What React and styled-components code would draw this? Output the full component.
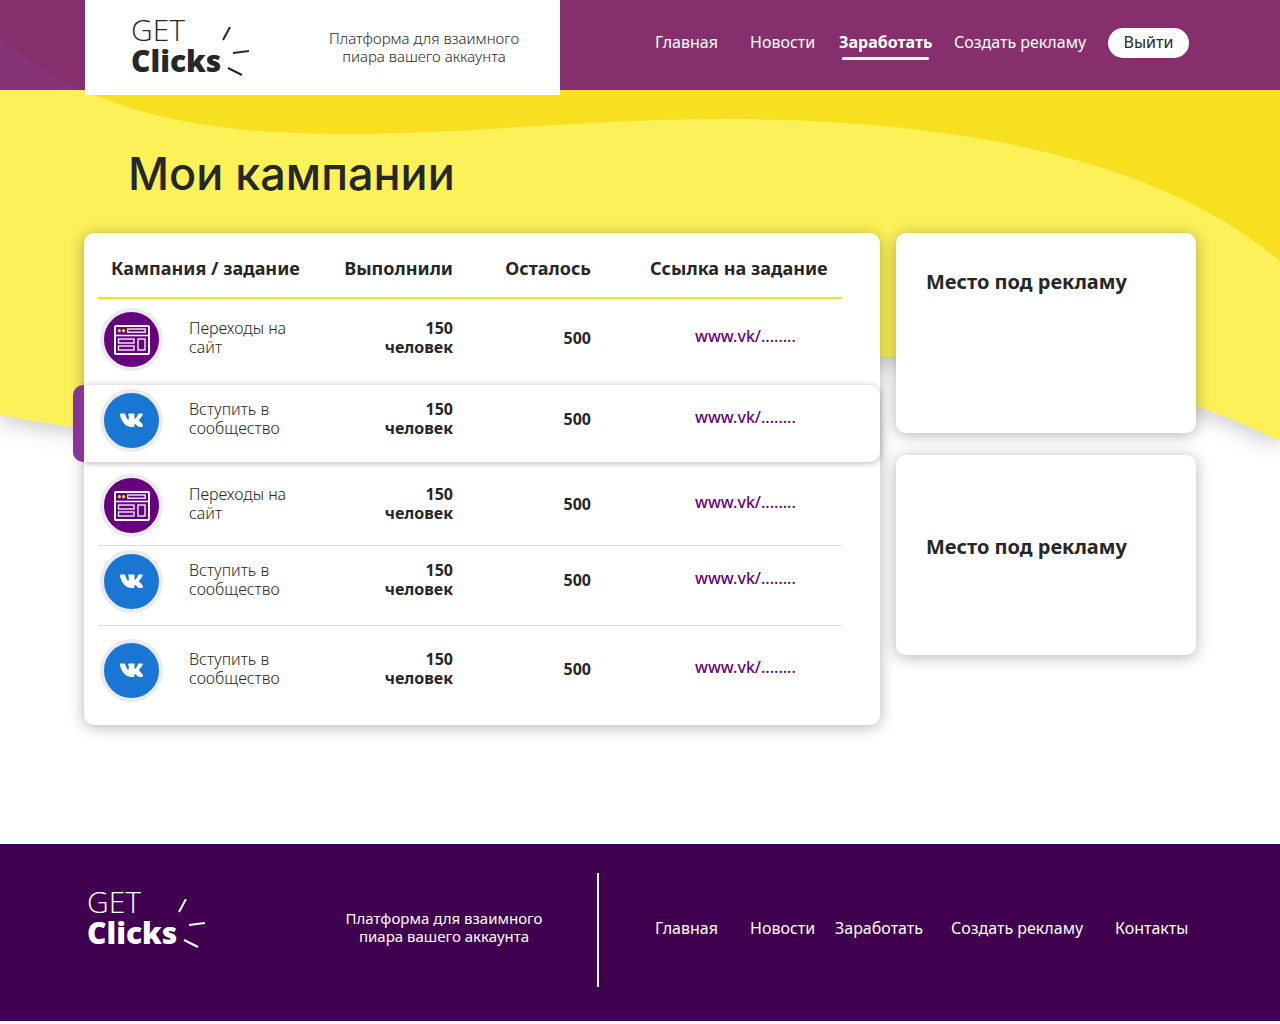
import styled, { createGlobalStyle } from "styled-components";

const campaigns = [
    { id: 1, type: "site", title: "Переходы на сайт", done: 150, left: 500, top: 9, bottom: 14 },
    { id: 2, type: "vk", title: "Вступить в сообщество", done: 150, left: 500, top: 4, bottom: 10, active: true },
    { id: 3, type: "site", title: "Переходы на сайт", done: 150, left: 500, top: 12, bottom: 8, line: true },
    { id: 4, type: "vk", title: "Вступить в сообщество", done: 150, left: 500, top: 4, bottom: 12, line: true },
    { id: 5, type: "vk", title: "Вступить в сообщество", done: 150, left: 500, top: 13, bottom: 23 },
];

function Logo() {
    return (
        <LogoBox>
            <LogoText>
                <LogoThin>GET</LogoThin>
                <LogoBold>Clicks</LogoBold>
            </LogoText>
            <svg width="28" height="50" viewBox="0 0 28 50" fill="none" stroke="currentColor" strokeWidth="2">
                <path d="M9 0 2 13M12 26l16-2M7 41l14 7" />
            </svg>
        </LogoBox>
    );
}

function SiteIcon() {
    return (
        <IconCircle $color="#67007f">
            <svg width="36" height="30" viewBox="0 0 36 30" fill="none" stroke="#fff">
                <rect x="1" y="1" width="34" height="28" rx="1" strokeWidth="2" />
                <path d="M1 10.5h34" strokeWidth="1.5" />
                <rect x="13.7" y="4" width="17.5" height="3.2" strokeWidth="1.3" />
                <rect x="4.5" y="14" width="15.5" height="4" strokeWidth="1.3" />
                <rect x="4.5" y="21" width="15.5" height="4" strokeWidth="1.3" />
                <rect x="24" y="14" width="7" height="11" strokeWidth="1.3" />
                <circle cx="5.3" cy="5.7" r="1.6" fill="#f7e020" stroke="none" />
                <circle cx="9.6" cy="5.7" r="1.6" fill="#f7e020" stroke="none" />
            </svg>
        </IconCircle>
    );
}

function VkIcon() {
    return (
        <IconCircle $color="#1976d2">
            <svg width="23" height="15" viewBox="0 0 23 15" fill="#fff">
                <path d="M.7.5h3.5c.6 0 .9.3 1.1.9C6.2 4.5 7.5 6.7 8.3 6.7c.4 0 .5-.5.5-1.4V3.2c0-1.1-.7-1.3-.7-1.8 0-.5.4-.9 1-.9h4.6c.6 0 .8.3.8.9v3.7c0 .6.2.8.4.8.5 0 2.3-2.3 3.2-4.6.2-.5.5-.8 1.1-.8h2.8c.8 0 1 .5.7 1.1-.6 1.7-3.1 4.6-3.5 5.2-.3.5-.2.8.2 1.2 1 1 2.8 2.6 3.5 4 .5.9.1 1.9-.9 1.9h-3c-.7 0-1.1-.3-1.6-.8-1.2-1.3-2-2.1-2.5-2.1-.4 0-.5.3-.5.9v1c0 .7-.3 1-1.2 1C7.9 14.1 4.2 12.6.9 5.2.3 3.7.1 2.500 0 1.300 0 .8.3.5.7.5z" />
            </svg>
        </IconCircle>
    );
}

function Waves() {
    return (
        <WavesSvg viewBox="0 0 1280 500" preserveAspectRatio="none" aria-hidden="true">
            <path
                className="light"
                d="M0 0H1280V441C1180 392 1040 352 880 357C650 364 480 440 280 440C170 440 90 432 0 415Z"
                fill="#fcf158"
            />
            <path
                d="M0 0H1280V261C1170 168 985 119 720 119C590 119 470 134 340 134C200 134 85 111 0 38Z"
                fill="#f7e020"
            />
        </WavesSvg>
    );
}

function CampaignRow({ item }) {
    return (
        <Row $top={item.top} $bottom={item.bottom} $active={item.active} $line={item.line}>
            <TaskCell>
                {item.type === "vk" ? <VkIcon /> : <SiteIcon />}
                <TaskName>{item.title}</TaskName>
            </TaskCell>
            <NumberCell>
                <Count>{item.done} человек</Count>
            </NumberCell>
            <NumberCell>{item.left}</NumberCell>
            <LinkCell>
                <TaskLink href="#task">www.vk/........</TaskLink>
            </LinkCell>
        </Row>
    );
}

function App() {
    return (
        <>
            <GlobalStyle />
            <Page>
                <Waves />
                <Header>
                    <HeaderInner>
                        <Brand>
                            <Logo />
                            <Tagline>Платформа для взаимного пиара вашего аккаунта</Tagline>
                        </Brand>
                        <HeaderNav>
                            <NavLink href="#main">Главная</NavLink>
                            <NavLink href="#news">Новости</NavLink>
                            <NavLink href="#earn" $current aria-current="page">Заработать</NavLink>
                            <NavLink href="#create">Создать рекламу</NavLink>
                            <ExitButton type="button">Выйти</ExitButton>
                        </HeaderNav>
                    </HeaderInner>
                </Header>
                <Main>
                    <Title>Мои кампании</Title>
                    <Columns>
                        <TableCard>
                            <Table>
                                <thead>
                                    <HeadRow>
                                        <HeadCell $indent={13}>Кампания / задание</HeadCell>
                                        <HeadCell $right>Выполнили</HeadCell>
                                        <HeadCell $right>Осталось</HeadCell>
                                        <HeadCell $indent={59}>Ссылка на задание</HeadCell>
                                    </HeadRow>
                                </thead>
                                <tbody>
                                    {campaigns.map((item) => (
                                        <CampaignRow key={item.id} item={item} />
                                    ))}
                                </tbody>
                            </Table>
                        </TableCard>
                        <Aside>
                            <AdCard $top={35}>Место под рекламу</AdCard>
                            <AdCard $top={78}>Место под рекламу</AdCard>
                        </Aside>
                    </Columns>
                </Main>
                <Footer>
                    <FooterInner>
                        <FooterBrand>
                            <Logo />
                            <Tagline $footer>Платформа для взаимного пиара вашего аккаунта</Tagline>
                        </FooterBrand>
                        <FooterNav>
                            <NavLink href="#main">Главная</NavLink>
                            <NavLink href="#news">Новости</NavLink>
                            <NavLink href="#earn">Заработать</NavLink>
                            <NavLink href="#create">Создать рекламу</NavLink>
                            <NavLink href="#contacts">Контакты</NavLink>
                        </FooterNav>
                    </FooterInner>
                </Footer>
            </Page>
        </>
    );
}

export default App;

// Styles

const GlobalStyle = createGlobalStyle`
    * {
        box-sizing: border-box;
    }

    body {
        margin: 0;
        background: #fff;
        color: #272727;
        font-family: "Noto Sans", "Open Sans", sans-serif;
        font-size: 16px;
    }
`;

const Page = styled.div`
    position: relative;
`;

const WavesSvg = styled.svg`
    position: absolute;
    top: 0;
    left: 0;
    z-index: -1;
    width: 100%;
    height: 500px;

    .light {
        filter: drop-shadow(0 6px 10px rgba(0, 0, 0, 0.2));
    }
`;

const Header = styled.header`
    height: 90px;
    background: rgba(104, 4, 127, 0.8);
`;

const HeaderInner = styled.div`
    display: flex;
    align-items: flex-start;
    justify-content: space-between;
    max-width: 1110px;
    margin: 0 auto;
`;

const Brand = styled.div`
    display: flex;
    justify-content: space-between;
    width: 475px;
    height: 95px;
    padding: 14px 36px 0 46px;
    background: #fff;
`;

const LogoBox = styled.div`
    display: flex;
`;

const LogoText = styled.div`
    display: flex;
    flex-direction: column;
    font-family: "Open Sans", sans-serif;
    font-size: 30px;
    line-height: 31px;

    & + svg {
        margin-top: 13px;
    }
`;

const LogoThin = styled.span`
    font-weight: 300;
`;

const LogoBold = styled.span`
    font-weight: 800;
`;

const Tagline = styled.p`
    width: 200px;
    margin: ${({ $footer }) => ($footer ? 23 : 15)}px 0 0;
    font-size: 15px;
    font-weight: ${({ $footer }) => ($footer ? 400 : 300)};
    line-height: 18px;
    text-align: center;
`;

const HeaderNav = styled.nav`
    display: grid;
    grid-template-columns: 95px 89px 115px 154px 81px;
    align-items: start;
    padding-top: 28px;
    margin-right: 6px;
`;

const NavLink = styled.a`
    position: relative;
    justify-self: start;
    color: #fff;
    font-weight: ${({ $current }) => ($current ? 700 : 400)};
    line-height: 29px;
    text-decoration: none;
    white-space: nowrap;

    &::after {
        content: "";
        display: ${({ $current }) => ($current ? "block" : "none")};
        position: absolute;
        right: 3px;
        bottom: -3px;
        left: 3px;
        height: 3px;
        border-radius: 2px;
        background: #fff;
    }
`;

const ExitButton = styled.button`
    height: 30px;
    padding: 0 0 2px;
    border: none;
    border-radius: 15px;
    background: #fff;
    color: #272727;
    font: inherit;
    cursor: pointer;
`;

const Main = styled.main`
    max-width: 1112px;
    margin: 0 auto;
    padding-bottom: 119px;
`;

const Title = styled.h1`
    margin: 0;
    padding: 54px 44px 29px;
    font-family: Inter, sans-serif;
    font-size: 45px;
    font-weight: 500;
    line-height: 60px;
`;

const Columns = styled.div`
    display: flex;
    align-items: flex-start;
    gap: 16px;
`;

const Card = styled.section`
    border-radius: 10px;
    background: #fff;
    box-shadow: 0 2px 15px rgba(0, 0, 0, 0.3);
`;

const TableCard = styled(Card)`
    flex: 1;
`;

const Table = styled.table`
    display: block;

    thead,
    tbody {
        display: block;
    }
`;

const Row = styled.tr`
    position: relative;
    display: grid;
    grid-template-columns: 225px 130px 138px 1fr;
    align-items: center;
    margin: ${({ $active }) => ($active ? "0" : "0 38px 0 14px")};
    padding: ${({ $top, $bottom, $active }) => `${$top}px ${$active ? 38 : 0}px ${$bottom}px ${$active ? 14 : 0}px`};
    border-bottom: ${({ $line }) => ($line ? "1px solid #d9dadb" : "none")};
    border-radius: ${({ $active }) => ($active ? "0 10px 10px 0" : "0")};
    background: #fff;
    box-shadow: ${({ $active }) => ($active ? "0 1px 6px rgba(0, 0, 0, 0.3)" : "none")};
    z-index: ${({ $active }) => ($active ? 1 : 0)};

    &::before {
        content: "";
        display: ${({ $active }) => ($active ? "block" : "none")};
        position: absolute;
        top: 0;
        bottom: 0;
        left: -11px;
        width: 11px;
        border-radius: 10px 0 0 10px;
        background: #86359a;
    }
`;

const HeadRow = styled.tr`
    display: grid;
    grid-template-columns: 225px 130px 138px 1fr;
    margin: 0 38px 0 14px;
    padding: 22px 0 16px;
    border-bottom: 2px solid #f7e020;
`;

const HeadCell = styled.th`
    padding: 0 0 0 ${({ $indent }) => $indent || 0}px;
    font-size: 18px;
    font-weight: 700;
    line-height: 26px;
    text-align: ${({ $right }) => ($right ? "right" : "left")};
    white-space: nowrap;
`;

const TaskCell = styled.td`
    display: flex;
    align-items: center;
    gap: 26px;
    padding: 0 0 0 2px;
`;

const TaskName = styled.span`
    width: 110px;
    padding-bottom: 3px;
    font-weight: 300;
    line-height: 19px;
`;

const NumberCell = styled.td`
    padding: 0 0 3px;
    font-weight: 700;
    line-height: 19px;
    text-align: right;
`;

const Count = styled.span`
    display: block;
    width: min-content;
    margin-left: auto;
`;

const LinkCell = styled.td`
    padding: 0 0 7px 104px;
    line-height: 19px;
`;

const TaskLink = styled.a`
    color: #67007f;
    font-weight: 500;
    text-decoration: none;
`;

const IconCircle = styled.span`
    display: flex;
    align-items: center;
    justify-content: center;
    width: 63px;
    height: 63px;
    border: 4px solid #ebebeb;
    border-radius: 50%;
    background: ${({ $color }) => $color};
`;

const Aside = styled.aside`
    display: flex;
    flex-direction: column;
    gap: 22px;
    width: 300px;
`;

const AdCard = styled(Card)`
    height: 200px;
    padding: ${({ $top }) => $top}px 30px 0;
    font-size: 20px;
    font-weight: 700;
    line-height: 28px;
`;

const Footer = styled.footer`
    height: 177px;
    padding-top: 29px;
    background: #40004f;
    color: #fff;
`;

const FooterInner = styled.div`
    display: flex;
    align-items: flex-start;
    justify-content: space-between;
    max-width: 1106px;
    margin: 0 auto;
`;

const FooterBrand = styled.div`
    display: flex;
    justify-content: space-between;
    width: 512px;
    height: 114px;
    padding: 13px 53px 0 0;
    border-right: 2px solid #fff;
`;

const FooterNav = styled.nav`
    display: grid;
    grid-template-columns: 95px 85px 116px 164px 78px;
    padding-top: 41px;
`;
